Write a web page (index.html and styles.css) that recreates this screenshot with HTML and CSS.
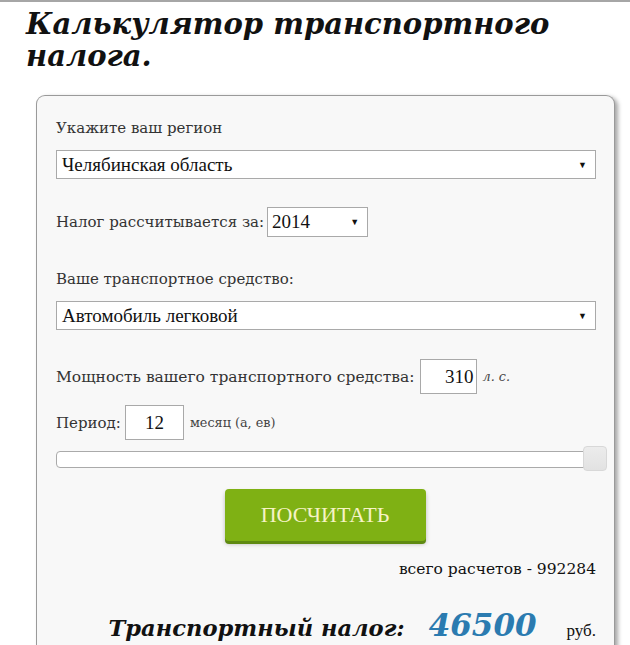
FILE: index.html
```html
<!DOCTYPE html>
<html>
<head>
    <title>Калькулятор транспортного налога</title>
    <meta charset="UTF-8">
    <link rel="stylesheet" href="styles.css">
</head>
<body>
<h1 class="title">Калькулятор транспортного налога.</h1>

<div class="calc">
    <div class="label">Укажите ваш регион</div>
    <div class="select wide">
        <span class="select-text">Челябинская область</span>
        <span class="arrow">&#9660;</span>
    </div>

    <div class="row year-row">
        <span class="label">Налог рассчитывается за:</span>
        <div class="select year">
            <span class="select-text">2014</span>
            <span class="arrow">&#9660;</span>
        </div>
    </div>

    <div class="label car-label">Ваше транспортное средство:</div>
    <div class="select wide">
        <span class="select-text">Автомобиль легковой</span>
        <span class="arrow">&#9660;</span>
    </div>

    <div class="row power-row">
        <span class="label power-label">Мощность вашего транспортного средства:</span>
        <div class="field power">310</div>
        <span class="unit unit-hp">л. с.</span>
    </div>

    <div class="row period-row">
        <span class="label">Период:</span>
        <div class="field period">12</div>
        <span class="unit">месяц (а, ев)</span>
    </div>

    <div class="slider">
        <div class="handle"></div>
    </div>

    <div class="btn-wrap">
        <button class="count-btn" type="button">ПОСЧИТАТЬ</button>
    </div>

    <div class="total-count">всего расчетов - 992284</div>

    <div class="result">
        <span class="result-label">Транспортный налог:</span>
        <span class="result-sum">46500</span>
        <span class="result-cur">руб.</span>
    </div>
</div>
</body>
</html>
```

FILE: styles.css
```css
body {
    margin: 0;
    border-top: 2px solid #a6a6a6;
    background: #fff;
    font-family: "Liberation Serif", "DejaVu Serif", serif;
    color: #222;
    overflow: hidden;
}

.title {
    margin: 0;
    padding: 6px 0 0 26px;
    font-family: "DejaVu Serif", serif;
    font-style: italic;
    font-weight: bold;
    font-size: 29px;
    line-height: 32px;
    color: #111;
}

/* main card */
.calc {
    margin: 23px 15px 0 36px;
    padding: 22px 18px 0 19px;
    height: 560px;
    background: #f8f8f8;
    border: 1px solid #9a9a9a;
    border-bottom: none;
    border-radius: 9px 9px 0 0;
    box-shadow: 3px 2px 4px rgba(0, 0, 0, 0.35);
}

.label {
    font-family: "DejaVu Serif", serif;
    font-size: 15px;
    line-height: 20px;
    color: #333;
}

.power-label { font-size: 15.5px; }

.select {
    position: relative;
    height: 29px;
    box-sizing: border-box;
    border: 1px solid #a9a9a9;
    background: #fff;
    display: flex;
    align-items: center;
    font-size: 19px;
    color: #111;
}

.select.wide {
    margin-top: 12px;
    padding-left: 5px;
}

.select.year {
    width: 101px;
    height: 30px;
    padding-left: 4px;
    margin-left: 3px;
}

.arrow {
    position: absolute;
    right: 8px;
    top: 9px;
    font-size: 9px;
    line-height: 10px;
}

.row {
    display: flex;
    align-items: center;
}

.year-row { margin-top: 28px; }
.car-label { margin-top: 32px; }
.power-row { margin-top: 29px; }
.period-row { margin-top: 11px; }

.field {
    box-sizing: border-box;
    height: 35px;
    border: 1px solid #a9a9a9;
    background: #fff;
    display: flex;
    align-items: center;
    font-size: 19px;
    color: #111;
}

.field.power {
    width: 57px;
    margin-left: 5px;
    justify-content: flex-end;
    padding-right: 2px;
}

.field.period {
    width: 59px;
    margin-left: 4px;
    justify-content: center;
}

.unit {
    margin-left: 6px;
    font-family: "DejaVu Serif", serif;
    font-size: 12.8px;
    color: #444;
}

.unit-hp { font-style: italic; }

.slider {
    position: relative;
    margin-top: 11px;
    height: 17px;
    box-sizing: border-box;
    border: 1px solid #aaa;
    border-radius: 4px;
    background: #fff;
}

.handle {
    position: absolute;
    right: -12px;
    top: -6px;
    width: 24px;
    height: 25px;
    box-sizing: border-box;
    border: 1px solid #d8d8d8;
    border-radius: 4px;
    background: linear-gradient(#ececec, #e2e2e2);
}

.btn-wrap {
    display: flex;
    justify-content: center;
    margin-top: 21px;
    padding-right: 2px;
}

.count-btn {
    width: 201px;
    height: 52px;
    border: none;
    border-radius: 4px;
    background: #7fb114;
    box-shadow: 0 3px 0 #5f8a12, 0 3px 4px rgba(0, 0, 0, 0.25);
    color: #f6f3c6;
    font-family: "Liberation Serif", serif;
    font-size: 22px;
}

.total-count {
    margin-top: 18px;
    text-align: right;
    font-family: "DejaVu Serif", serif;
    font-size: 15.5px;
    line-height: 20px;
    color: #111;
}

.result {
    margin-top: 28px;
    display: flex;
    align-items: baseline;
    justify-content: flex-end;
}

.result-label {
    font-family: "DejaVu Serif", serif;
    font-style: italic;
    font-weight: bold;
    font-size: 22.6px;
    color: #111;
}

.result-sum {
    margin-left: 24px;
    font-family: "DejaVu Serif", serif;
    font-style: italic;
    font-weight: bold;
    font-size: 31px;
    color: #2b7bb0;
}

.result-cur {
    margin-left: 30px;
    font-size: 17px;
    color: #111;
}
```
